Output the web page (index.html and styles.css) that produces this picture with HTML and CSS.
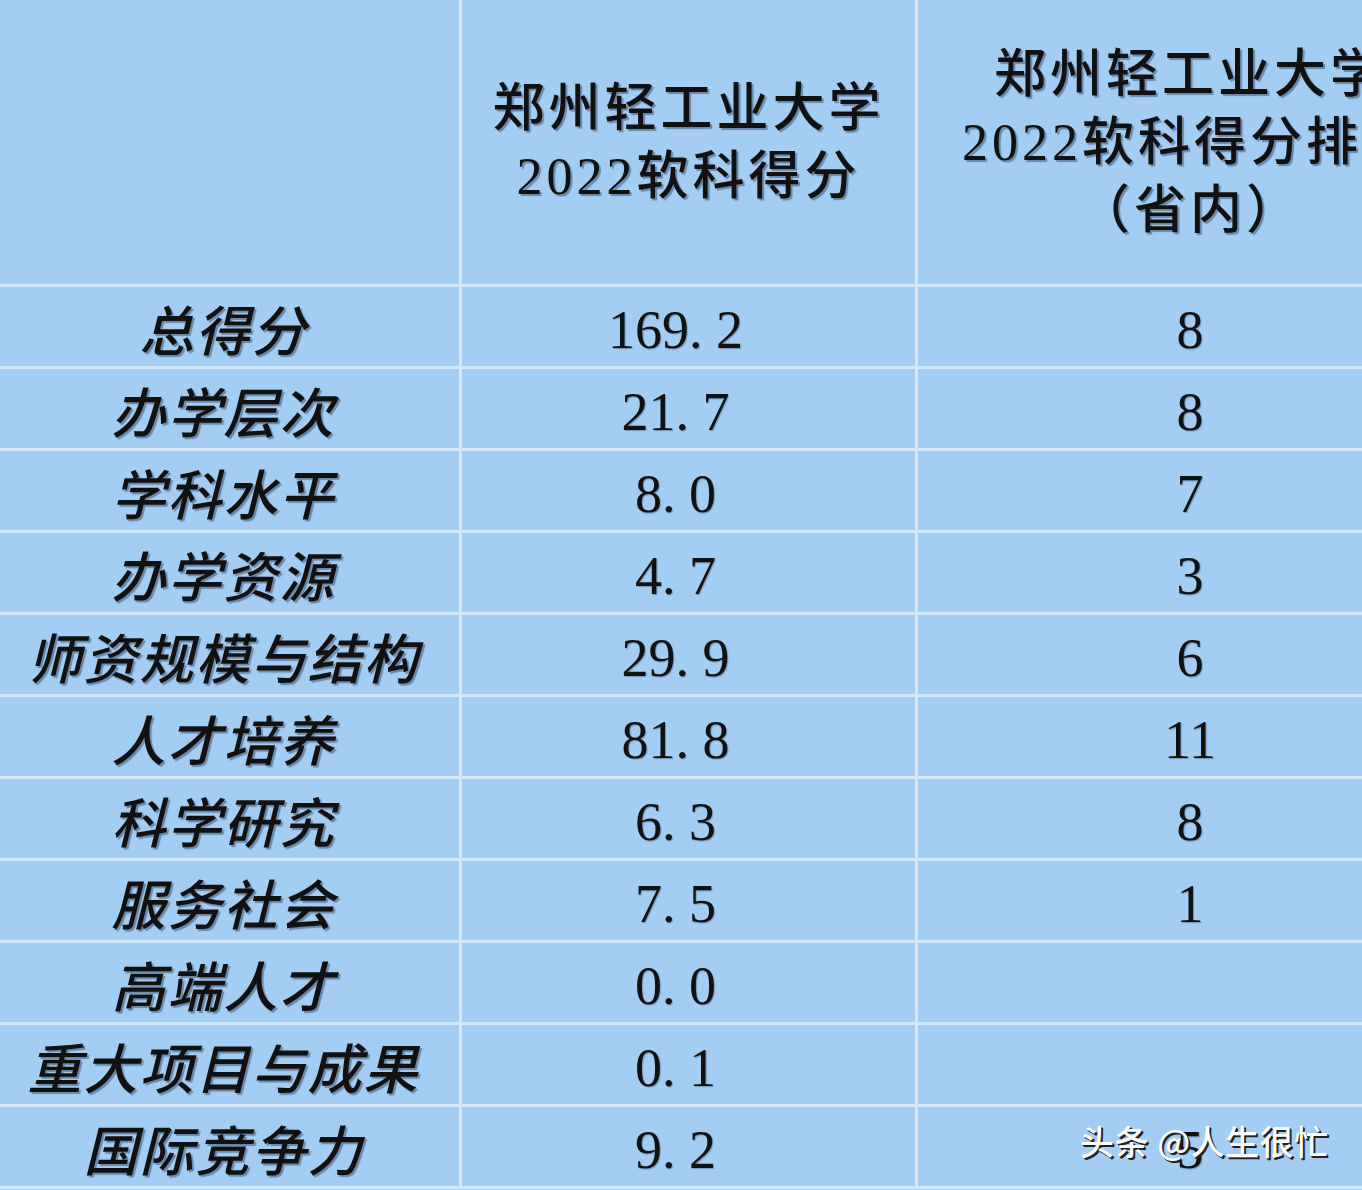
FILE: index.html
```html
<!DOCTYPE html>
<html lang="zh-CN">
<head>
<meta charset="utf-8">
<title>郑州轻工业大学2022软科得分</title>
<link rel="stylesheet" href="styles.css">
</head>
<body>
<div class="page">
  <div class="table">
    <div class="cell head"></div>
    <div class="cell head"><span class="htext">郑州轻工业大学<br>2022软科得分</span></div>
    <div class="cell head"><span class="htext">郑州轻工业大学<br>2022软科得分排名<br>（省内）</span></div>

    <div class="cell label">总得分</div><div class="cell num score">169<span class="dot">.</span>2</div><div class="cell num">8</div>
    <div class="cell label">办学层次</div><div class="cell num score">21<span class="dot">.</span>7</div><div class="cell num">8</div>
    <div class="cell label">学科水平</div><div class="cell num score">8<span class="dot">.</span>0</div><div class="cell num">7</div>
    <div class="cell label">办学资源</div><div class="cell num score">4<span class="dot">.</span>7</div><div class="cell num">3</div>
    <div class="cell label">师资规模与结构</div><div class="cell num score">29<span class="dot">.</span>9</div><div class="cell num">6</div>
    <div class="cell label">人才培养</div><div class="cell num score">81<span class="dot">.</span>8</div><div class="cell num">11</div>
    <div class="cell label">科学研究</div><div class="cell num score">6<span class="dot">.</span>3</div><div class="cell num">8</div>
    <div class="cell label">服务社会</div><div class="cell num score">7<span class="dot">.</span>5</div><div class="cell num">1</div>
    <div class="cell label">高端人才</div><div class="cell num score">0<span class="dot">.</span>0</div><div class="cell num"></div>
    <div class="cell label">重大项目与成果</div><div class="cell num score">0<span class="dot">.</span>1</div><div class="cell num"></div>
    <div class="cell label">国际竞争力</div><div class="cell num score">9<span class="dot">.</span>2</div><div class="cell num">5</div>
  </div>
  <div class="watermark">头条 @人生很忙</div>
</div>
</body>
</html>
```
FILE: styles.css
```css
html, body {
  margin: 0;
  padding: 0;
}
body {
  width: 1362px;
  height: 1190px;
  overflow: hidden;
  background: #a3cdf2;
}
.page {
  position: relative;
  width: 1362px;
  height: 1190px;
  overflow: hidden;
}
.table {
  display: grid;
  grid-template-columns: 459px 453px 544px;
  grid-template-rows: 284px repeat(11, 79px);
  gap: 3px;
  background: #d5e6f6;
  width: 1462px;
  padding-bottom: 3px;
}
.cell {
  background: #a3cdf2;
  display: flex;
  align-items: center;
  justify-content: center;
  color: #111;
  text-shadow: 2px 2px 1px rgba(40, 50, 70, 0.45);
}
.head {
  text-align: center;
}
.htext {
  font-family: "Liberation Serif", "Noto Sans CJK SC", serif;
  font-size: 52px;
  font-weight: 500;
  line-height: 68px;
  letter-spacing: 4px;
  padding-top: 2px;
}
.label {
  font-family: "Noto Sans CJK SC", sans-serif;
  font-style: italic;
  font-size: 54px;
  font-weight: 500;
  letter-spacing: 2px;
  padding-right: 12px;
  padding-top: 2px;
}
.num {
  font-family: "Liberation Serif", serif;
  font-size: 54px;
  padding-top: 6px;
  text-shadow: 1px 1px 1px rgba(40, 50, 70, 0.35);
}
.score {
  padding-right: 26px;
}
.dot {
  margin-right: 0.25em;
}
.watermark {
  position: absolute;
  left: 1080px;
  top: 1116px;
  font-family: "Noto Sans CJK SC", sans-serif;
  font-size: 34px;
  font-weight: 500;
  color: #ffffff;
  letter-spacing: 0.5px;
  text-shadow: 2px 2px 0 #222, 1px 1px 0 #333;
}
```
